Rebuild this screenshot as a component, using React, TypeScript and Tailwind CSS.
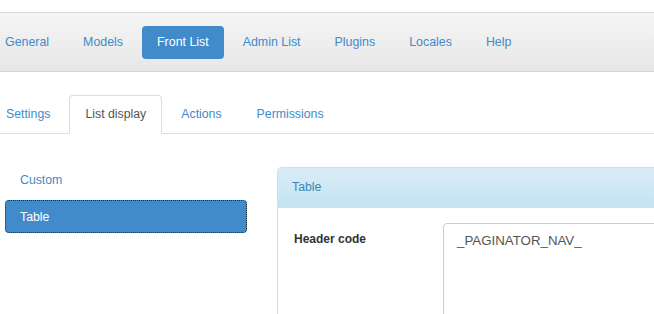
import React from "react";

const navItems = ["General", "Models", "Front List", "Admin List", "Plugins", "Locales", "Help"];
const tabs = ["Settings", "List display", "Actions", "Permissions"];

export default function App() {
  return (
    <div className="w-[654px] h-[314px] overflow-hidden bg-white font-['Liberation_Sans',Arial,sans-serif]">
      <div className="h-[12px]" />
      <nav className="h-[60px] border-y border-[#d6d6d6] bg-gradient-to-b from-[#f5f5f5] to-[#e7e7e7] flex items-center">
        <ul className="flex gap-[4px] -ml-[10px]">
          {navItems.map((n) => (
            <li
              key={n}
              className={
                n === "Front List"
                  ? "px-[15px] h-[33px] leading-[33px] rounded-[4px] text-[12.4px] bg-[#428bca] text-white"
                  : "px-[15px] h-[33px] leading-[33px] rounded-[4px] text-[12.4px] text-[#428bca]"
              }
            >
              {n}
            </li>
          ))}
        </ul>
      </nav>
      <ul className="mt-[23px] flex gap-[3px] border-b border-[#dddddd] -ml-[11px] pl-[1px]">
        {tabs.map((t) => (
          <li key={t} className="-mb-px">
            <div
              className={
                t === "List display"
                  ? "px-[15px] pt-[9px] pb-[10px] leading-[18px] text-[12.3px] border border-[#dddddd] border-b-white bg-white rounded-t-[4px] text-[#555555]"
                  : "px-[15px] pt-[9px] pb-[10px] leading-[18px] text-[12.3px] border border-transparent rounded-t-[4px] text-[#428bca]"
              }
            >
              {t}
            </div>
          </li>
        ))}
      </ul>
      <div className="mt-[30px] flex items-start">
        <div className="ml-[5px] w-[242px] flex flex-col gap-[3px] shrink-0">
          <div className="px-[15px] h-[33px] leading-[33px] text-[12.3px] text-[#428bca] rounded-[4px]">Custom</div>
          <div className="px-[14px] h-[33px] leading-[32px] text-[12.3px] text-white bg-[#428bca] rounded-[4px] border border-dotted border-[#1e2a38]">
            Table
          </div>
        </div>
        <div className="ml-[30px] mt-[3px] w-[420px] shrink-0 border border-[#bce8f1] rounded-t-[4px] h-[200px]">
          <div className="h-[40px] leading-[39px] px-[14px] border-b border-[#bce8f1] bg-gradient-to-b from-[#d9edf7] to-[#c4e3f3] text-[12.3px] text-[#3a87ad] rounded-t-[3px]">
            Table
          </div>
          <div className="flex pt-[15px] pl-[16px]">
            <div className="w-[149px] shrink-0 mt-[7px] leading-[18px] text-[12px] font-bold text-[#333333]">Header code</div>
            <div className="w-[300px] shrink-0 h-[120px] border border-[#cccccc] rounded-[4px] px-[13px] pt-[8px] leading-[18px] text-[13.3px] text-[#555555]">
              _PAGINATOR_NAV_
            </div>
          </div>
        </div>
      </div>
    </div>
  );
}
